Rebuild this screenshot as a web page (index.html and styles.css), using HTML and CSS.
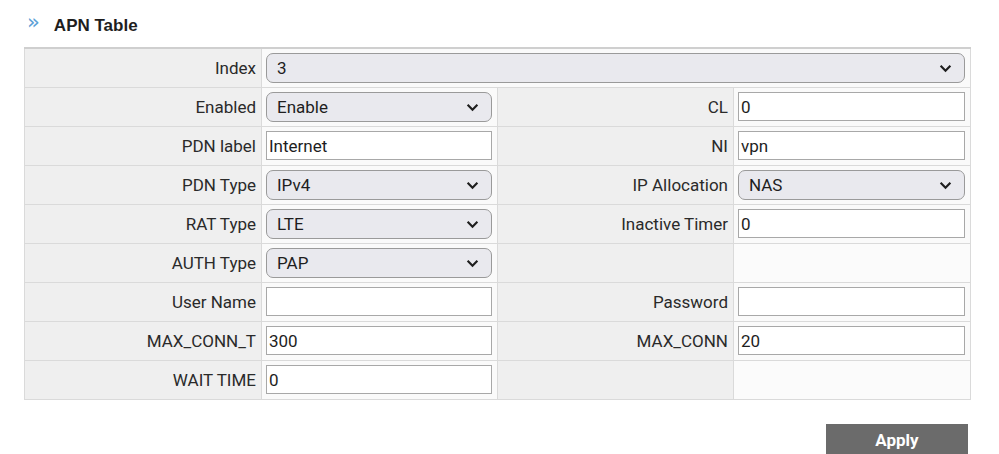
FILE: index.html
```html
<!DOCTYPE html>
<html>
<head>
<meta charset="utf-8">
<link rel="stylesheet" href="styles.css">
</head>
<body>
<div class="page">
  <div class="title">
    <span class="chev">&raquo;</span>
    <h2>APN Table</h2>
  </div>
  <table class="apn">
    <colgroup><col class="c1"><col class="c2"><col class="c3"><col class="c4"></colgroup>
    <tr>
      <th>Index</th>
      <td colspan="3"><div class="sel"><select><option>3</option></select><svg class="arrow" viewBox="0 0 12 8"><path d="M1.5 1.5 L6 6 L10.5 1.5"/></svg></div></td>
    </tr>
    <tr>
      <th>Enabled</th>
      <td><div class="sel"><select><option>Enable</option></select><svg class="arrow" viewBox="0 0 12 8"><path d="M1.5 1.5 L6 6 L10.5 1.5"/></svg></div></td>
      <th>CL</th>
      <td><input type="text" value="0"></td>
    </tr>
    <tr>
      <th>PDN label</th>
      <td><input type="text" value="Internet"></td>
      <th>NI</th>
      <td><input type="text" value="vpn"></td>
    </tr>
    <tr>
      <th>PDN Type</th>
      <td><div class="sel"><select><option>IPv4</option></select><svg class="arrow" viewBox="0 0 12 8"><path d="M1.5 1.5 L6 6 L10.5 1.5"/></svg></div></td>
      <th>IP Allocation</th>
      <td><div class="sel"><select><option>NAS</option></select><svg class="arrow" viewBox="0 0 12 8"><path d="M1.5 1.5 L6 6 L10.5 1.5"/></svg></div></td>
    </tr>
    <tr>
      <th>RAT Type</th>
      <td><div class="sel"><select><option>LTE</option></select><svg class="arrow" viewBox="0 0 12 8"><path d="M1.5 1.5 L6 6 L10.5 1.5"/></svg></div></td>
      <th>Inactive Timer</th>
      <td><input type="text" value="0"></td>
    </tr>
    <tr>
      <th>AUTH Type</th>
      <td><div class="sel"><select><option>PAP</option></select><svg class="arrow" viewBox="0 0 12 8"><path d="M1.5 1.5 L6 6 L10.5 1.5"/></svg></div></td>
      <th></th>
      <td class="empty"></td>
    </tr>
    <tr>
      <th>User Name</th>
      <td><input type="text" value=""></td>
      <th>Password</th>
      <td><input type="password" value=""></td>
    </tr>
    <tr>
      <th>MAX_CONN_T</th>
      <td><input type="text" value="300"></td>
      <th>MAX_CONN</th>
      <td><input type="text" value="20"></td>
    </tr>
    <tr>
      <th>WAIT TIME</th>
      <td><input type="text" value="0"></td>
      <th></th>
      <td class="empty"></td>
    </tr>
  </table>
  <div class="actions">
    <button class="apply">Apply</button>
  </div>
</div>
</body>
</html>
```
FILE: styles.css
```css
html, body {
  margin: 0;
  padding: 0;
  background: #ffffff;
}
.page {
  width: 999px;
  font-family: Roboto, "Liberation Sans", sans-serif;
  color: #2a2a2a;
}
.title {
  display: flex;
  align-items: center;
  height: 24px;
  padding: 13px 0 0 27px;
  gap: 14px;
}
.chev {
  font-family: "DejaVu Sans", sans-serif;
  font-size: 21px;
  color: #5d9fd6;
  line-height: 1;
  margin-top: -6px;
}
.title h2 {
  margin: 0;
  font-family: "Liberation Sans", Arial, sans-serif;
  font-weight: bold;
  font-size: 17px;
  color: #1e1e1e;
  position: relative;
  top: 1px;
}
.apn {
  margin: 10px 0 0 24px;
  width: 946px;
  border-collapse: collapse;
  table-layout: fixed;
  border: 1px solid #c8c8c8;
  border-top: 2px solid #cfcfcf;
}
.c1 { width: 237px; }
.c2 { width: 236px; }
.c3 { width: 236px; }
.c4 { width: 237px; }
.apn th, .apn td {
  border: 1px solid #dadada;
  height: 39px;
  padding: 0;
  box-sizing: border-box;
}
.apn th {
  background: #efefef;
  font-weight: normal;
  font-size: 17px;
  text-align: right;
  padding-right: 5px;
  color: #2a2a2a;
}
.apn td {
  background: #fafafa;
  padding: 0 5px 0 4px;
}
.apn td.empty {
  background: #fbfbfb;
}
.sel {
  position: relative;
}
.sel select {
  appearance: none;
  -webkit-appearance: none;
  width: 100%;
  height: 30px;
  box-sizing: border-box;
  border: 1px solid #9a9a9a;
  border-radius: 7px;
  background: #e9e9ee;
  font-family: Roboto, "Liberation Sans", sans-serif;
  font-size: 17px;
  color: #1e1e1e;
  padding: 0 0 0 10px;
  margin: 0;
  display: block;
}
.arrow {
  position: absolute;
  right: 13px;
  top: 11px;
  width: 13px;
  height: 9px;
  fill: none;
  stroke: #1e1e1e;
  stroke-width: 2;
  pointer-events: none;
}
.apn input {
  display: block;
  width: 100%;
  height: 29px;
  box-sizing: border-box;
  border: 1px solid #a8a8a8;
  background: #ffffff;
  font-family: Roboto, "Liberation Sans", sans-serif;
  font-size: 17px;
  color: #1e1e1e;
  padding: 0 2px;
  margin: 0;
}
.actions {
  display: flex;
  justify-content: flex-end;
  width: 968px;
  margin-top: 24px;
}
.apply {
  width: 142px;
  height: 32px;
  border: none;
  background: #6b6b6b;
  color: #ffffff;
  font-family: Roboto, "Liberation Sans", sans-serif;
  font-weight: bold;
  font-size: 17px;
  padding: 0;
}
```
